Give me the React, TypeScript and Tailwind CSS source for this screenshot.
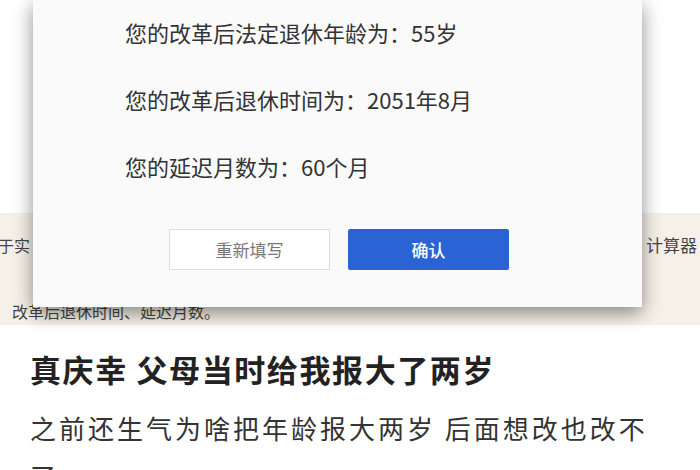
import React from "react";

const cjk = { fontFamily: '"Noto Sans CJK SC", "Noto Sans", sans-serif' };

const results = [
  "您的改革后法定退休年龄为：55岁",
  "您的改革后退休时间为：2051年8月",
  "您的延迟月数为：60个月",
];

export default function App() {
  return (
    <div className="relative h-[470px] w-[700px] overflow-hidden bg-white" style={cjk}>
      {/* screenshot part */}
      <div className="relative flex h-[325px] flex-col">
        <div className="h-[213px] bg-white" />
        <div className="flex flex-1 flex-col bg-[#f6f1e8] text-[16px] text-[#444]">
          <div className="mt-[19px] flex items-center justify-between">
            <span className="-ml-[2px]">于实</span>
            <span className="mr-[3px] text-[17px]">计算器</span>
          </div>
          <div className="ml-[12px] mt-[45px] leading-none">改革后退休时间、延迟月数。</div>
        </div>

        {/* modal */}
        <div className="absolute left-[33px] top-0 flex h-[307px] w-[609px] flex-col bg-[#fafafa] shadow-[0_6px_18px_rgba(0,0,0,0.45)]">
          <div className="flex flex-col gap-[45px] pl-[92px] pt-[21px] text-[22px] leading-[22px] text-[#333]">
            {results.map((r) => (
              <div key={r}>{r}</div>
            ))}
          </div>
          <div className="mt-[52px] flex gap-[18px] pl-[136px]">
            <button className="h-[41px] w-[161px] border border-[#dcdcdc] bg-white text-[17px] text-[#777]">
              重新填写
            </button>
            <button className="h-[41px] w-[161px] rounded-[2px] bg-[#2a64d4] text-[17px] font-medium text-white">
              确认
            </button>
          </div>
        </div>
      </div>

      {/* article */}
      <div className="pl-[30px] pr-[40px] pt-[26px]">
        <h1 className="text-[31px] font-bold leading-[36px] tracking-[1.6px] text-[#222]">
          真庆幸 父母当时给我报大了两岁
        </h1>
        <p className="mt-[17px] text-[26px] leading-[48px] tracking-[3px] text-[#333]">
          之前还生气为啥把年龄报大两岁 后面想改也改不了。
        </p>
      </div>
    </div>
  );
}
